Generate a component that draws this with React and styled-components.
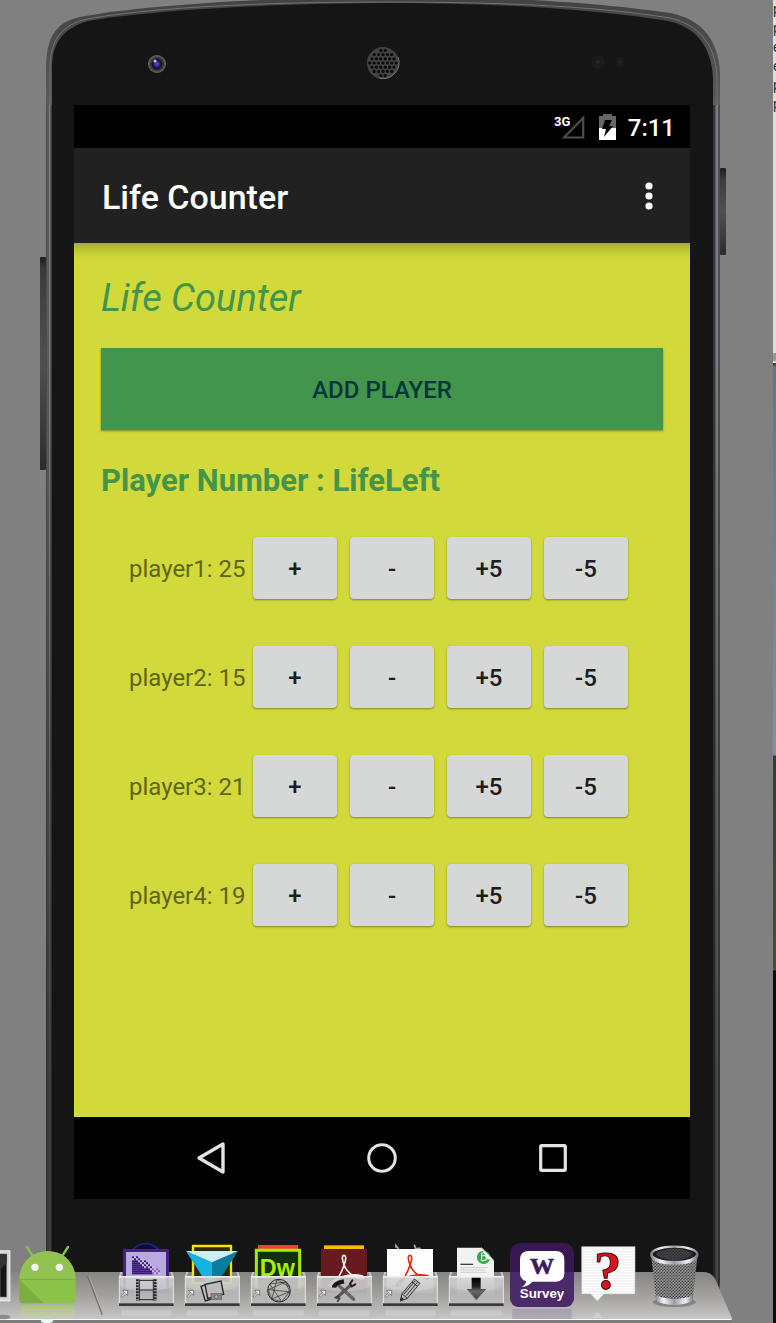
import React, { useState } from "react";
import styled, { createGlobalStyle } from "styled-components";

const GlobalStyle = createGlobalStyle`
  *, *::before, *::after { box-sizing: border-box; }
  body { margin: 0; background: #808080; font-family: Roboto, sans-serif; }
  h1, h2, h3, ul { margin: 0; padding: 0; }
  button { font-family: inherit; border: 0; padding: 0; cursor: pointer; }
  svg { display: block; }
`;

const Desktop = styled.div`
  display: flex;
  min-height: 100vh;
  background: #808080;
  overflow: hidden;
`;

const Stage = styled.main`
  position: relative;
  flex: 1;
  min-width: 0;
  display: flex;
`;

const WindowEdge = styled.aside`
  width: 3px;
  overflow: hidden;
  color: #16324a;
  font: 14px/19px "Liberation Sans", sans-serif;
  background: linear-gradient(
    #d9dde0 0 353px,
    #989898 353px 361px,
    #dcdcdc 361px 363px,
    #34424e 363px 365px,
    #5f7688 366px,
    #84929b 755px,
    #303c3a 756px,
    #4c4c38 970px,
    #0c0c06 971px
  );
`;

const Phone = styled.section`
  position: relative;
  flex: 1;
  min-width: 0;
  display: flex;
  flex-direction: column;
  margin: 0 53px 0 46px;
`;

const TopBezel = styled.svg`
  width: 100%;
  height: 105px;
  flex: none;
`;

const SideKey = styled.span`
  position: absolute;
  top: ${(p) => p.$top}px;
  ${(p) => p.$side}: -6px;
  width: 6px;
  height: ${(p) => p.$length}px;
  background: linear-gradient(#1e1e1e, #3c3c3c 12px, #505050 50%, #2c2c2c);
  border-radius: 1px;
`;

const Body = styled.div`
  flex: 1;
  display: flex;
  flex-direction: column;
  padding: 0 30px 124px 28px;
  border-bottom-right-radius: 40px;
  background:
    linear-gradient(transparent 20%, rgba(21, 21, 21, 0.5) 80%),
    linear-gradient(
      90deg,
      #4c4c4e 0 1px,
      #5c5c60 1px 3px,
      #77777c 3px 4px,
      #5c5c60 4px 5px,
      #3c3c3e 5px 6px,
      #151515 6px calc(100% - 7px),
      #39393b calc(100% - 7px) calc(100% - 5px),
      #5e5e62 calc(100% - 5px) calc(100% - 4px),
      #7c7c82 calc(100% - 4px) calc(100% - 2px),
      #4e4e52 calc(100% - 2px)
    );
`;

const Screen = styled.div`
  flex: 1;
  display: flex;
  flex-direction: column;
  background: #000;
`;

const StatusBar = styled.div`
  height: 43px;
  display: flex;
  align-items: center;
  justify-content: flex-end;
  padding-right: 15px;
  color: #fff;
`;

const BatteryIcon = styled.svg`
  margin: 0 12px 0 14px;
`;

const Clock = styled.time`
  padding-top: 2px;
  font-size: 24px;
  line-height: 30px;
  font-weight: 500;
`;

const AppBar = styled.header`
  height: 95px;
  display: flex;
  align-items: center;
  justify-content: space-between;
  padding: 2px 21px 0 28px;
  background: #212121;
`;

const AppTitle = styled.h1`
  color: #fff;
  font-size: 34px;
  line-height: 40px;
  font-weight: 500;
`;

const MenuButton = styled.button`
  width: 40px;
  height: 48px;
  display: grid;
  place-items: center;
  background: none;
`;

const Content = styled.div`
  flex: 1;
  padding: 33px 27px 24px;
  background: linear-gradient(#a7ac2f, #bcc334 6px, #cdd538 13px, #d2d93a 18px);
`;

const Heading = styled.h2`
  color: #43954b;
  font-size: 38px;
  line-height: 44px;
  font-weight: 400;
  font-style: italic;
`;

const AddButton = styled.button`
  display: block;
  width: 100%;
  height: 82px;
  margin-top: 28px;
  padding-top: 2px;
  background: #43954b;
  color: #03363a;
  font-size: 24px;
  font-weight: 500;
  box-shadow: 0 1px 2px rgba(0, 0, 0, 0.4);
`;

const ListTitle = styled.h3`
  margin-top: 33px;
  color: #43954b;
  font-size: 31px;
  line-height: 36px;
  font-weight: 700;
`;

const PlayerList = styled.ul`
  display: flex;
  flex-direction: column;
  gap: 47px;
  margin-top: 38px;
  padding-left: 28px;
  list-style: none;
`;

const PlayerRow = styled.li`
  display: grid;
  grid-template-columns: 111px repeat(4, 84px);
  align-items: center;
  gap: 13px;
`;

const PlayerLabel = styled.span`
  padding-top: 2px;
  color: #61641b;
  font-size: 24px;
  line-height: 32px;
  white-space: nowrap;
`;

const StepButton = styled.button`
  height: 62px;
  padding-top: 2px;
  border-radius: 4px;
  background: #d6d7d7;
  color: #1d1d1d;
  font-size: 24px;
  font-weight: 500;
  box-shadow: 0 1px 2px rgba(0, 0, 0, 0.4);
`;

const NavBar = styled.nav`
  height: 82px;
  display: flex;
  justify-content: center;
  background: #000;
`;

const NavButton = styled.button`
  flex: 0 1 171px;
  display: grid;
  place-items: center;
  background: none;
`;

const Dock = styled.footer`
  position: absolute;
  left: 0;
  right: 41px;
  bottom: 0;
  height: 80px;
`;

const Shelf = styled.svg`
  position: absolute;
  left: 0;
  bottom: 0;
  width: 100%;
  height: 51px;
`;

const DockItems = styled.div`
  position: relative;
  display: flex;
`;

const DockButton = styled.button`
  flex: none;
  width: ${(p) => p.$width || 66}px;
  height: 80px;
  background: none;
`;

const DockPicture = styled.svg`
  overflow: visible;
`;

const DockGap = styled.div`
  flex: none;
  width: 32px;
`;

function Speaker() {
  const holes = [];
  for (let r = -3; r <= 3; r++) {
    for (let c = -4; c <= 4; c++) {
      const x = c * 4.4 + (r % 2 ? 2.2 : 0);
      const y = r * 4.2;
      if (x * x + y * y < 200) holes.push(<circle key={`${r},${c}`} cx={337 + x} cy={63 + y} r="1.6" fill="#0a0a0a" />);
    }
  }
  return (
    <g>
      <circle cx="337" cy="63" r="16" fill="#434343" />
      {holes}
      <path d="M352 57A16 16 0 0 1 333 78" fill="none" stroke="#777" />
    </g>
  );
}

function Bezel() {
  return (
    <TopBezel viewBox="0 0 674 105" preserveAspectRatio="none" aria-hidden="true">
      <defs>
        <linearGradient id="rim" x2="0" y2="1">
          <stop offset="0" stopColor="#424244" />
          <stop offset="1" stopColor="#5a5a5e" />
        </linearGradient>
        <radialGradient id="lens">
          <stop offset="0" stopColor="#5a5ae0" />
          <stop offset=".3" stopColor="#23238a" />
          <stop offset=".5" stopColor="#15151c" />
          <stop offset=".7" stopColor="#38383a" />
          <stop offset="1" stopColor="#6a6a6d" />
        </radialGradient>
      </defs>
      <path d="M0 105V65C1 38 9 24 30 18C80 7 190-1 337-4C480-3 560 4 624 13C655 19 672 39 674 72V105Z" fill="url(#rim)" />
      <path d="M4 105V65C5 43 13 27 37 20C90 9 200 2 337 2C480 2 560 8 624 18C653 25 669 44 671 76V105" fill="none" stroke="#727277" />
      <path d="M6 105V65C7 43 16 29 42 21C95 11 210 4 337 3C470 3 560 11 622 21C650 27 665 46 667 78V105Z" fill="#151515" />
      <circle cx="111" cy="64" r="9" fill="url(#lens)" />
      <circle cx="109" cy="61" r="1.5" fill="#b9c5f4" />
      <Speaker />
      <circle cx="552" cy="62" r="7" fill="#1b1b1c" />
      <circle cx="552" cy="62" r="2" fill="#352018" />
      <circle cx="574" cy="62" r="5" fill="#1b1b1c" />
      <circle cx="574" cy="62" r="1.6" fill="#352018" />
    </TopBezel>
  );
}

function Tray({ front, alias = true }) {
  return (
    <g>
      <path d="M18 99L22 87H28L24 99ZM182 99L178 87H172L176 99Z" fill="#c9c9c9" />
      <rect x="18" y="99" width="164" height="86" fill="url(#tray)" />
      <path d="M22 103H178V132Q100 158 22 132Z" fill="#fff" opacity=".18" />
      <rect x="18" y="99" width="164" height="5" fill="#eee" />
      <path d="M19 99V186M181 99V186" stroke="#e4e4e4" strokeWidth="3" />
      <rect x="18" y="181" width="164" height="8" fill="#3a3a3a" />
      {alias && <path d="M24 160L35 149L29 142H44V157L38 152L28 163Z" fill="#eee" stroke="#555" strokeWidth="2" />}
      {front}
      <rect x="24" y="200" width="152" height="18" fill="#fff" opacity=".18" />
    </g>
  );
}

function DockArt({ children, width = 66, label }) {
  return (
    <DockButton type="button" aria-label={label} $width={width}>
      <DockPicture width={width} height="80" viewBox={`0 0 ${width * 3} 240`} aria-hidden="true">
        {children}
      </DockPicture>
    </DockButton>
  );
}

function AcrobatMark({ color }) {
  return (
    <path
      d="M99 37C91 37 94 54 100 68C106 83 117 94 132 101C145 108 157 110 158 104C158 96 133 94 112 97C84 101 64 113 58 124C55 132 62 132 69 123C82 107 96 78 102 57C106 44 104 37 99 37Z"
      fill="none"
      stroke={color}
      strokeWidth="5"
    />
  );
}

function PixelFade() {
  const cells = [];
  for (let r = 0; r < 9; r++) {
    for (let c = 0; c < 14; c++) {
      const edge = c - r * 1.5;
      if (edge > 3) continue;
      cells.push(
        <rect key={`${r}-${c}`} x={57 + c * 6} y={40 + r * 6} width="6" height="6" fill={edge > -2 && (r + c) % 2 ? "#cbb9e6" : c > 9 ? "#8a62ae" : "#3b1974"} />
      );
    }
  }
  return <g>{cells}</g>;
}

function DockRow() {
  return (
    <DockItems>
      <DockArt label="Terminal" width={15}>
        <path d="M0 23H30V174H0Z" fill="#d6d6d6" stroke="#fff" strokeWidth="2" />
        <path d="M0 33H20V162H0Z" fill="#151515" stroke="#777" strokeWidth="2" />
        <path d="M0 80L20 60V33H0Z" fill="#333" />
        <ellipse cx="8" cy="222" rx="24" ry="7" fill="#555" opacity=".5" />
      </DockArt>
      <DockArt label="Android tool">
        <defs>
          <linearGradient id="tray" x2="0" y2="1">
            <stop offset="0" stopColor="#c9c9c9" stopOpacity=".82" />
            <stop offset=".6" stopColor="#b5b5b5" stopOpacity=".95" />
            <stop offset="1" stopColor="#bababa" />
          </linearGradient>
          <linearGradient id="greenGlow" x2="0" y2="1">
            <stop offset="0" stopColor="#a5d651" stopOpacity=".6" />
            <stop offset="1" stopColor="#cde59a" stopOpacity=".2" />
          </linearGradient>
        </defs>
        <rect x="18" y="186" width="160" height="42" rx="8" fill="url(#greenGlow)" />
        <path d="M36 12L56 43M159 12L139 43" stroke="#8fbd4c" strokeWidth="7" strokeLinecap="round" />
        <path d="M13 109C13 60 50 24 98 24S182 60 182 109Z" fill="#92c351" />
        <path d="M13 109H182V170Q182 181 171 181H24Q13 181 13 170Z" fill="#8bc34a" />
        <path d="M13 109L86 181H24Q13 181 13 170Z" fill="#7cae44" />
        <path d="M13 109H182" stroke="#76a83f" strokeWidth="2" />
        <circle cx="60" cy="73" r="11" fill="#f4f4f4" />
        <circle cx="133" cy="73" r="11" fill="#f4f4f4" />
        <ellipse cx="96" cy="234" rx="19" ry="6" fill="#e4fbff" />
      </DockArt>
      <DockGap aria-hidden="true">
        <svg width="32" height="80" viewBox="0 0 96 240">
          <path d="M20 99L64 215" stroke="#6f6f6d" strokeWidth="4" />
          <path d="M24 99L67 213" stroke="#b9b9b7" strokeWidth="2" />
        </svg>
      </DockGap>
      <DockArt label="Video apps">
        <circle cx="98" cy="52" r="50" fill="#10102a" stroke="#1729a8" strokeWidth="4" />
        <rect x="30" y="18" width="138" height="132" fill="#46208a" />
        <rect x="39" y="27" width="120" height="110" fill="#b6aade" />
        <PixelFade />
        <Tray
          front={
            <g fill="none" stroke="#222" strokeWidth="3">
              <path d="M79 109V173M121 109V173M79 141H121M79 112H121M79 170H121" />
              <path d="M73 109V173M127 109V173" strokeWidth="8" strokeDasharray="6 3" />
            </g>
          }
        />
      </DockArt>
      <DockArt label="Photo apps">
        <path d="M42 9H156V120H42Z" fill="#302800" stroke="#f2e600" strokeWidth="7" />
        <path d="M21 24L99 57V146Z" fill="#14b4e2" />
        <path d="M177 24L99 57V146Z" fill="#087d9f" />
        <path d="M21 24H177L99 58Z" fill="#cdeef9" />
        <Tray
          front={
            <g fill="#bcbcbc" stroke="#222" strokeWidth="4">
              <path d="M66 130L84 124L97 168L79 174Z" />
              <path d="M78 124L126 114L134 154L86 166Z" />
              <rect x="96" y="151" width="32" height="19" fill="#888" stroke="#666" strokeWidth="2" />
              <circle cx="112" cy="161" r="6" fill="#aaa" stroke="#555" strokeWidth="2" />
            </g>
          }
        />
      </DockArt>
      <DockArt label="Web apps">
        <rect x="39" y="6" width="120" height="40" fill="#f1402f" />
        <path d="M34 22H164V146H34Z" fill="#123009" stroke="#a6ec00" strokeWidth="9" />
        <text x="97" y="100" textAnchor="middle" fontFamily="Liberation Sans, sans-serif" fontWeight="700" fontSize="70" fill="#a6f000">
          Dw
        </text>
        <Tray
          front={
            <g fill="none" stroke="#252525" strokeWidth="3">
              <circle cx="102" cy="143" r="34" />
              <path d="M74 123L122 117L134 146L110 176L80 168L70 140L122 117M74 123L110 176M96 110L80 168L134 146M70 140L134 146M96 110L134 132" strokeWidth="2" />
            </g>
          }
        />
      </DockArt>
      <DockArt label="Utilities">
        <rect x="39" y="7" width="120" height="40" fill="#f4bd00" />
        <rect x="30" y="18" width="138" height="132" fill="#681a20" />
        <AcrobatMark color="#eee" />
        <Tray
          front={
            <g strokeLinecap="round" fill="none">
              <path d="M84 128L128 169" stroke="#666" strokeWidth="10" />
              <path d="M117 128L78 164" stroke="#555" strokeWidth="9" />
              <path d="M69 134Q70 120 99 115" stroke="#181818" strokeWidth="13" strokeLinecap="butt" />
              <path d="M124 112L117 122L122 130L133 124" stroke="#222" strokeWidth="6" />
              <path d="M72 164L80 160L86 166L80 175" stroke="#444" strokeWidth="5" />
            </g>
          }
        />
      </DockArt>
      <DockArt label="Documents">
        <path d="M57 14V8L65 18M112 5L116 17L131 16" stroke="#aaa" strokeWidth="5" fill="none" />
        <rect x="30" y="18" width="138" height="132" fill="#fdfdfd" />
        <AcrobatMark color="#df2b19" />
        <Tray
          front={
            <g fill="#bbb" stroke="#333" strokeWidth="3" strokeLinejoin="round">
              <path d="M70 174L75 152L112 108L129 121L91 166Z" />
              <path d="M75 152L91 166M81 153L115 113M88 158L121 118M105 117L121 130" />
              <path d="M70 174L73 163L80 169Z" fill="#222" />
            </g>
          }
        />
      </DockArt>
      <DockArt label="Downloads">
        <path d="M42 14H116L153 53V158H42Z" fill="#f2f2f2" />
        <circle cx="122" cy="43" r="20" fill="#36a543" />
        <path d="M114 34L122 28L131 33M113 50L119 54L130 50V38H116V48" stroke="#d3efd5" strokeWidth="4" fill="none" />
        <path d="M116 14L153 53L131 47Z" fill="#fff" stroke="#bbb" strokeWidth="2" />
        <path d="M52 64H90" stroke="#444" strokeWidth="4" />
        <path d="M52 74H135M52 81H126M52 88H132" stroke="#bbb" strokeWidth="2" />
        <Tray alias={false} front={<path d="M86 104H113V138H130L100 171L71 138H86Z" fill="url(#arrow)" />} />
        <defs>
          <linearGradient id="arrow" x2="0" y2="1">
            <stop offset="0" stopColor="#000" />
            <stop offset=".4" stopColor="#222" />
            <stop offset=".6" stopColor="#666" />
            <stop offset="1" stopColor="#444" />
          </linearGradient>
        </defs>
      </DockArt>
      <DockArt label="W Survey">
        <rect x="3" width="192" height="192" rx="30" fill="#371850" />
        <path d="M3 87H195V162Q195 192 165 192H33Q3 192 3 162Z" fill="#4b2a6a" />
        <rect x="10" y="198" width="178" height="30" fill="#72559b" opacity=".25" />
        <path d="M59 24H140Q166 24 166 50V90Q166 116 140 116H70Q58 130 37 132Q49 127 52 115Q33 110 33 90V50Q33 24 59 24Z" fill="#fff" />
        <text x="99" y="94" textAnchor="middle" fontFamily="Liberation Serif, serif" fontWeight="700" fontSize="72" fill="#3a1b5e" stroke="#3a1b5e" strokeWidth="2">
          W
        </text>
        <text x="99" y="166" textAnchor="middle" fontFamily="Liberation Sans, sans-serif" fontWeight="700" fontSize="40" fill="#fff">
          Survey
        </text>
      </DockArt>
      <DockArt label="Help">
        <defs>
          <pattern id="ruled" width="8" height="8" patternUnits="userSpaceOnUse">
            <rect width="8" height="8" fill="#fff" />
            <rect width="8" height="4" fill="#f1f1f1" />
          </pattern>
        </defs>
        <path d="M20 11H180V153H87L67 174L47 153H20Z" fill="url(#ruled)" stroke="#bbb" strokeWidth="2" />
        <text x="98" y="138" textAnchor="middle" fontFamily="Liberation Serif, serif" fontWeight="700" fontSize="164" fill="#d8141d" stroke="#3c0a0c" strokeWidth="3">
          ?
        </text>
        <path d="M20 225H52L67 205L82 225H180" fill="#fff" opacity=".25" />
      </DockArt>
      <DockArt label="Trash">
        <defs>
          <pattern id="mesh" width="9" height="9" patternUnits="userSpaceOnUse">
            <rect width="9" height="9" fill="#999" />
            <ellipse cx="2.5" cy="2.5" rx="2.8" ry="1.8" fill="#303030" />
            <ellipse cx="7" cy="7" rx="2.8" ry="1.8" fill="#303030" />
          </pattern>
          <linearGradient id="metal">
            <stop offset="0" stopColor="#85858b" />
            <stop offset=".2" stopColor="#f4f4fb" />
            <stop offset=".5" stopColor="#9d9da7" />
            <stop offset=".8" stopColor="#f0f0f8" />
            <stop offset="1" stopColor="#77777e" />
          </linearGradient>
        </defs>
        <ellipse cx="100" cy="178" rx="64" ry="14" fill="#444" opacity=".4" />
        <path d="M31 42L45 170Q100 196 155 170L169 42Z" fill="url(#mesh)" />
        <path d="M44 157Q100 180 156 157L154 175Q100 198 46 175Z" fill="url(#metal)" />
        <ellipse cx="100" cy="34" rx="69" ry="23" fill="#1d1d1d" stroke="url(#metal)" strokeWidth="7" />
        <path d="M31 36Q40 61 100 61T169 36" fill="none" stroke="url(#metal)" strokeWidth="8" />
        <path d="M45 31Q100 2 155 31Q148 49 100 51Q52 49 45 31Z" fill="url(#mesh)" opacity=".35" />
      </DockArt>
    </DockItems>
  );
}

const initialPlayers = [25, 15, 21, 19];
const steps = [
  { label: "+", by: 1 },
  { label: "-", by: -1 },
  { label: "+5", by: 5 },
  { label: "-5", by: -5 },
];

export default function App() {
  const [players, setPlayers] = useState(initialPlayers);
  const change = (index, by) => setPlayers((all) => all.map((life, i) => (i === index ? life + by : life)));

  return (
    <>
      <GlobalStyle />
      <Desktop>
        <Stage>
          <Phone>
            <SideKey $side="left" $top={257} $length={213} />
            <SideKey $side="right" $top={168} $length={87} />
            <Bezel />
            <Body>
              <Screen>
                <StatusBar>
                  <svg width="31" height="26" viewBox="0 0 31 26" role="img" aria-label="3G signal">
                    <path d="M10 23.5L29.2 4V23.5Z" fill="none" stroke="#4d4d4d" strokeWidth="2.2" />
                    <text x="0" y="12" fontFamily="Roboto, sans-serif" fontWeight="700" fontSize="13" fill="#fff">
                      3G
                    </text>
                  </svg>
                  <BatteryIcon width="17" height="26" viewBox="0 0 17 26" role="img" aria-label="Battery charging">
                    <path d="M4 0H13V2H17V14H0V2H4Z" fill="#666" />
                    <path d="M0 14H17V26H0Z" fill="#fff" />
                    <path d="M6 6H13L10 12H14L5 23L7 15H3Z" fill="#000" />
                  </BatteryIcon>
                  <Clock>7:11</Clock>
                </StatusBar>
                <AppBar>
                  <AppTitle>Life Counter</AppTitle>
                  <MenuButton type="button" aria-label="More options">
                    <svg width="8" height="30" viewBox="0 0 8 30" fill="#fff">
                      <circle cx="4" cy="4" r="3.6" />
                      <circle cx="4" cy="14" r="3.6" />
                      <circle cx="4" cy="24" r="3.6" />
                    </svg>
                  </MenuButton>
                </AppBar>
                <Content>
                  <Heading>Life Counter</Heading>
                  <AddButton type="button" onClick={() => setPlayers((all) => [...all, 20])}>
                    ADD PLAYER
                  </AddButton>
                  <ListTitle>Player Number : LifeLeft</ListTitle>
                  <PlayerList>
                    {players.map((life, i) => (
                      <PlayerRow key={i}>
                        <PlayerLabel>{`player${i + 1}: ${life}`}</PlayerLabel>
                        {steps.map((step) => (
                          <StepButton key={step.label} type="button" onClick={() => change(i, step.by)}>
                            {step.label}
                          </StepButton>
                        ))}
                      </PlayerRow>
                    ))}
                  </PlayerList>
                </Content>
                <NavBar>
                  <NavButton type="button" aria-label="Back">
                    <svg width="30" height="34" viewBox="0 0 30 34">
                      <path d="M27 3V31L3 17Z" fill="none" stroke="#e4e4e4" strokeWidth="3.4" strokeLinejoin="round" />
                    </svg>
                  </NavButton>
                  <NavButton type="button" aria-label="Home">
                    <svg width="30" height="30" viewBox="0 0 30 30">
                      <circle cx="15" cy="15" r="13.3" fill="none" stroke="#e4e4e4" strokeWidth="3" />
                    </svg>
                  </NavButton>
                  <NavButton type="button" aria-label="Overview">
                    <svg width="28" height="28" viewBox="0 0 28 28">
                      <rect x="1.7" y="1.7" width="24.6" height="24.6" rx="1" fill="none" stroke="#e4e4e4" strokeWidth="3.2" />
                    </svg>
                  </NavButton>
                </NavBar>
              </Screen>
            </Body>
          </Phone>
          <Dock>
            <Shelf viewBox="0 0 732 51" preserveAspectRatio="none" aria-hidden="true">
              <defs>
                <linearGradient id="shelf" x2="0" y2="1">
                  <stop offset="0" stopColor="#858481" />
                  <stop offset=".5" stopColor="#a3a29f" />
                  <stop offset="1" stopColor="#c8c8c6" />
                </linearGradient>
              </defs>
              <path d="M0 0H703Q711 0 715 7L732 46V51H0Z" fill="#7c7c7c" />
              <path d="M0 0H703Q711 0 715 7L732 46V48H0Z" fill="url(#shelf)" />
              <path d="M0 47.5H731" stroke="#fff" />
            </Shelf>
            <DockRow />
          </Dock>
        </Stage>
        <WindowEdge aria-hidden="true">p p e e p p</WindowEdge>
      </Desktop>
    </>
  );
}
